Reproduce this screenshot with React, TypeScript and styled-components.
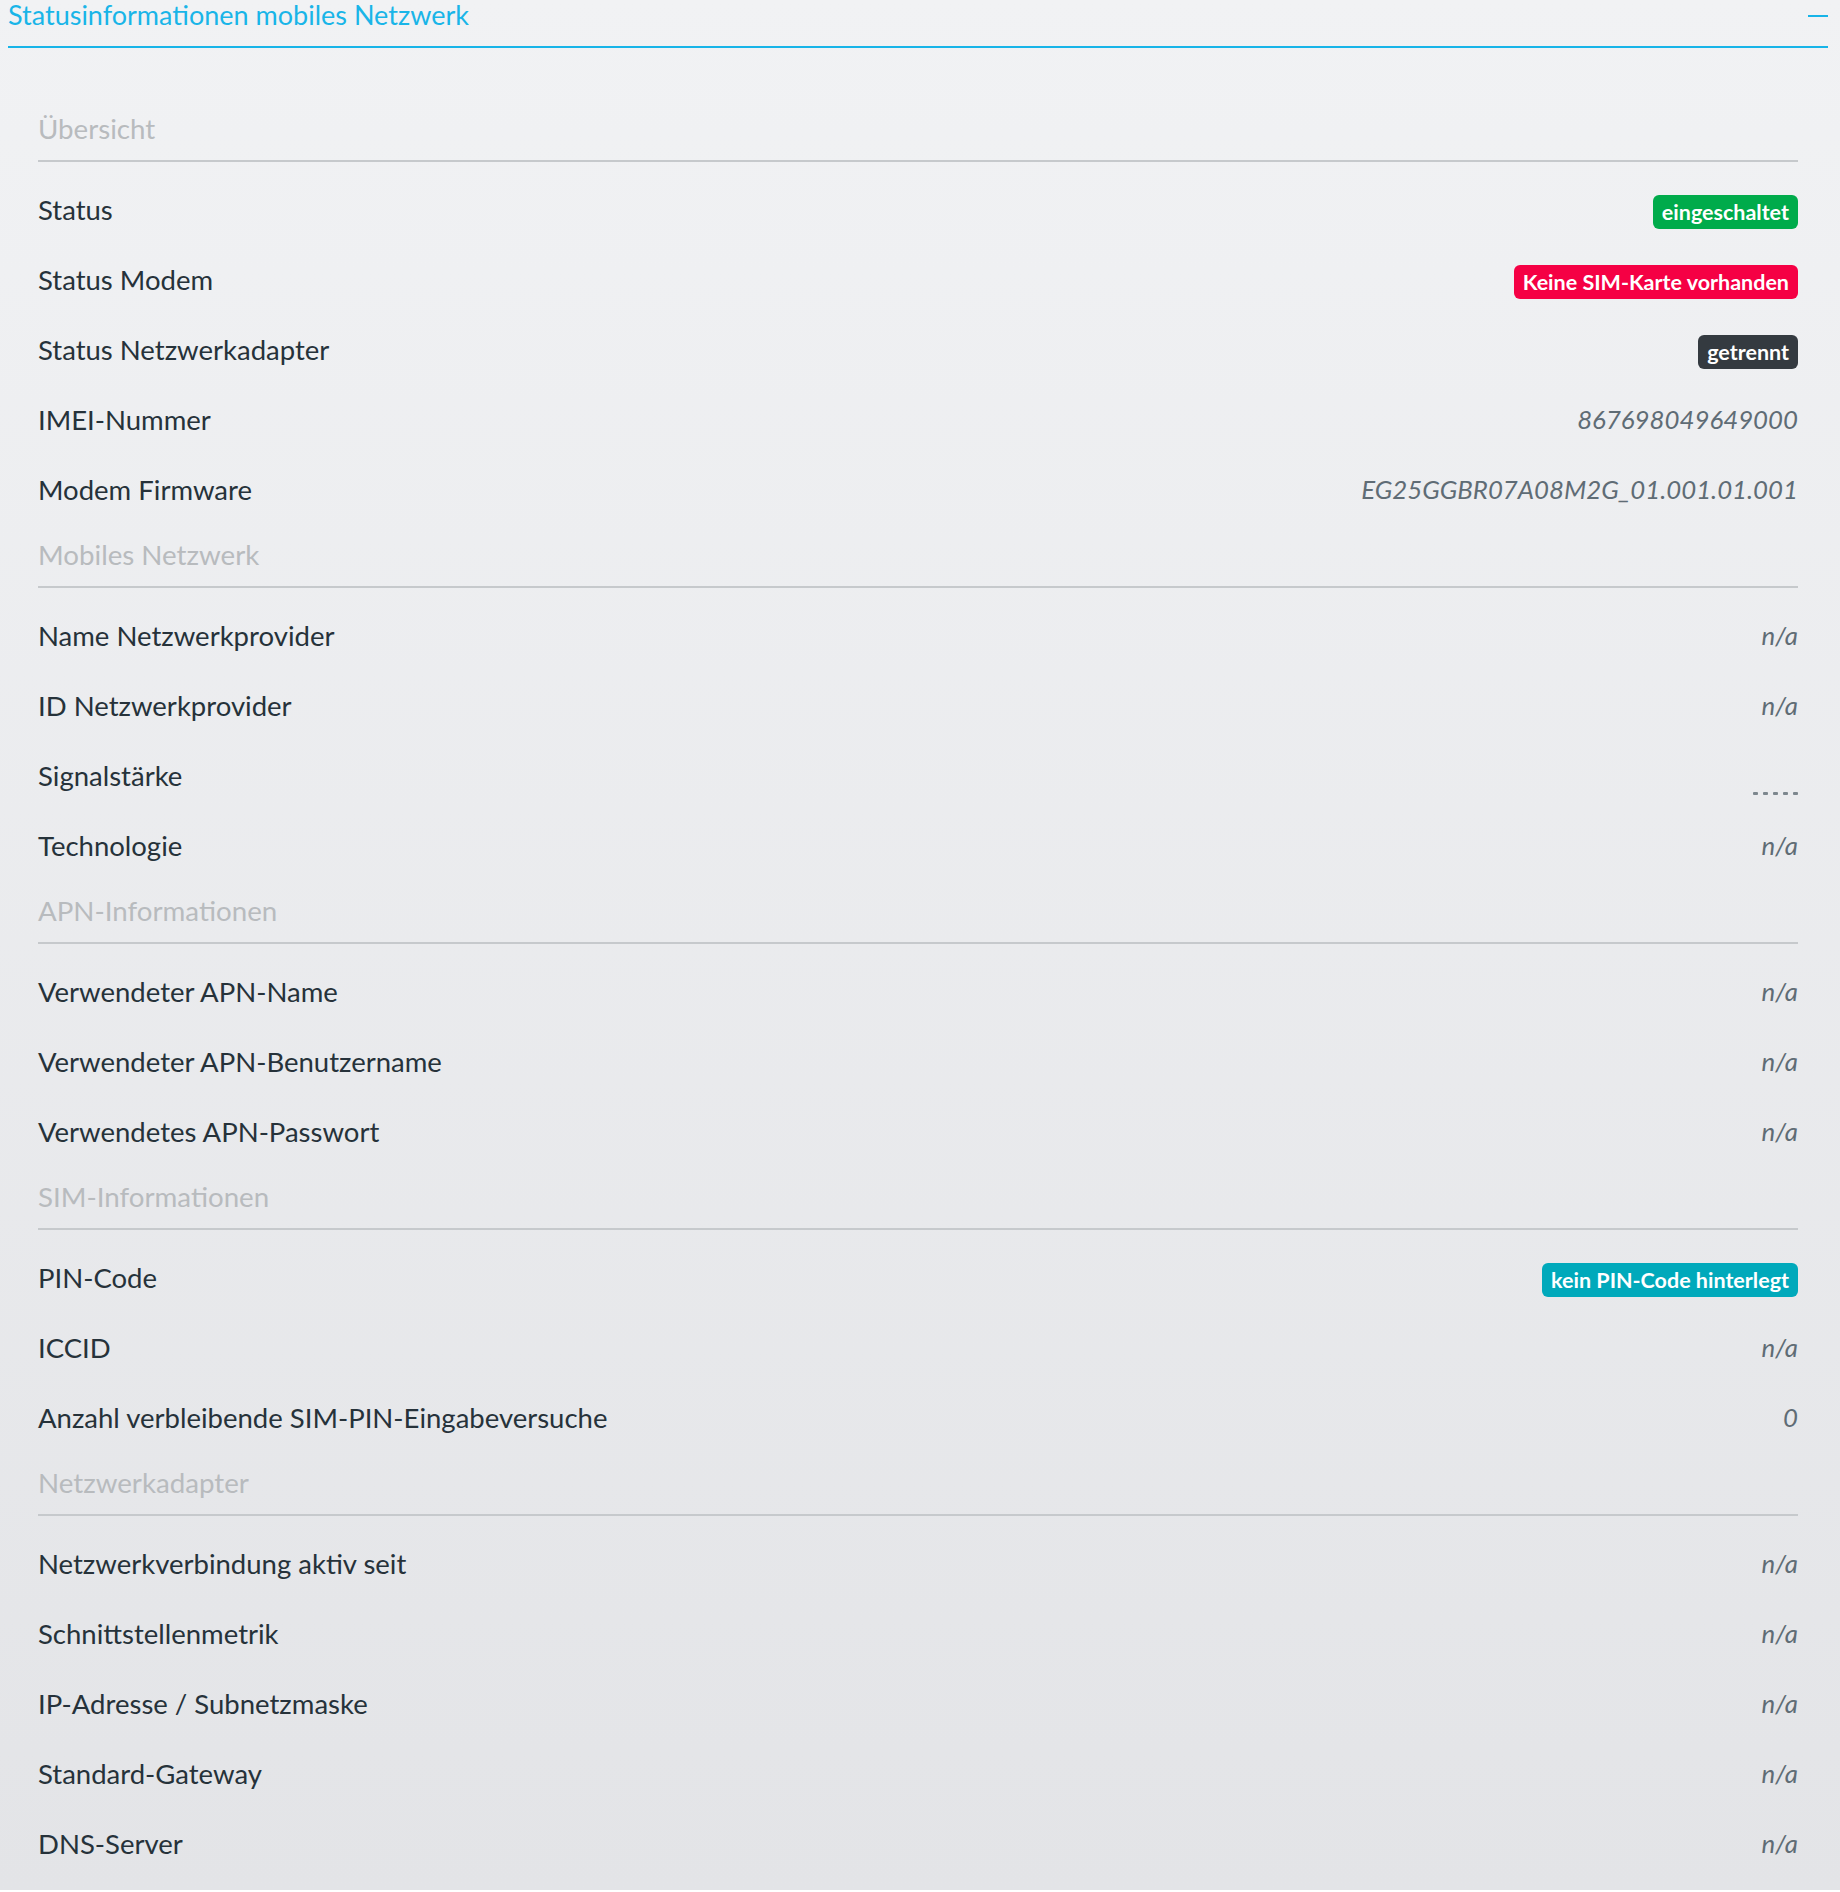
import React from "react";
import styled, { createGlobalStyle } from "styled-components";

type Tone = "success" | "danger" | "dark" | "info";

type Value =
  | { kind: "text"; text: string }
  | { kind: "badge"; tone: Tone; text: string }
  | { kind: "signal" };

type Row = { label: string; value: Value };
type Section = { title: string; rows: Row[] };

const na: Value = { kind: "text", text: "n/a" };

const sections: Section[] = [
  {
    title: "Übersicht",
    rows: [
      { label: "Status", value: { kind: "badge", tone: "success", text: "eingeschaltet" } },
      { label: "Status Modem", value: { kind: "badge", tone: "danger", text: "Keine SIM-Karte vorhanden" } },
      { label: "Status Netzwerkadapter", value: { kind: "badge", tone: "dark", text: "getrennt" } },
      { label: "IMEI-Nummer", value: { kind: "text", text: "867698049649000" } },
      { label: "Modem Firmware", value: { kind: "text", text: "EG25GGBR07A08M2G_01.001.01.001" } },
    ],
  },
  {
    title: "Mobiles Netzwerk",
    rows: [
      { label: "Name Netzwerkprovider", value: na },
      { label: "ID Netzwerkprovider", value: na },
      { label: "Signalstärke", value: { kind: "signal" } },
      { label: "Technologie", value: na },
    ],
  },
  {
    title: "APN-Informationen",
    rows: [
      { label: "Verwendeter APN-Name", value: na },
      { label: "Verwendeter APN-Benutzername", value: na },
      { label: "Verwendetes APN-Passwort", value: na },
    ],
  },
  {
    title: "SIM-Informationen",
    rows: [
      { label: "PIN-Code", value: { kind: "badge", tone: "info", text: "kein PIN-Code hinterlegt" } },
      { label: "ICCID", value: na },
      { label: "Anzahl verbleibende SIM-PIN-Eingabeversuche", value: { kind: "text", text: "0" } },
    ],
  },
  {
    title: "Netzwerkadapter",
    rows: [
      { label: "Netzwerkverbindung aktiv seit", value: na },
      { label: "Schnittstellenmetrik", value: na },
      { label: "IP-Adresse / Subnetzmaske", value: na },
      { label: "Standard-Gateway", value: na },
      { label: "DNS-Server", value: na },
    ],
  },
];

const toneColors: Record<Tone, string> = {
  success: "#00ab4b",
  danger: "#f50044",
  dark: "#343a40",
  info: "#00a9bb",
};

const GlobalStyle = createGlobalStyle`
  body {
    margin: 0;
    background: #ffffff;
    font-family: Lato, "Open Sans", sans-serif;
  }
`;

const Page = styled.div`
  height: 1890px;
  box-sizing: border-box;
  padding: 0 12px 11px 8px;
  background: linear-gradient(180deg, #f1f2f4 0%, #e3e4e7 100%);
`;

const Header = styled.div`
  display: flex;
  justify-content: space-between;
  align-items: flex-start;
  height: 46px;
  border-bottom: 2px solid #17b4e8;
`;

const Title = styled.h2`
  margin: 0;
  font-size: 27px;
  font-weight: 400;
  line-height: 30px;
  color: #19b5e8;
`;

const Collapse = styled.span`
  display: block;
  width: 20px;
  height: 2px;
  margin-top: 15px;
  background: #17b4e8;
`;

const Body = styled.div`
  padding: 50px 30px 0 30px;
`;

const SectionTitle = styled.div`
  padding: 16px 0 16px;
  font-size: 27.7px;
  line-height: 30px;
  color: #b8bbbe;
  border-bottom: 2px solid #c6c9cc;
`;

const Rows = styled.div`
  padding-top: 12px;
`;

const RowLine = styled.div`
  display: flex;
  justify-content: space-between;
  align-items: center;
  height: 70px;
`;

const Label = styled.span`
  font-size: 27.5px;
  color: #26323a;
`;

const ValueText = styled.span`
  font-size: 25.8px;
  font-style: italic;
  color: #5f6c75;
`;

const Badge = styled.span<{ $tone: Tone }>`
  display: inline-block;
  margin-top: 5px;
  padding: 5px 9px;
  border-radius: 6px;
  font-size: 21.5px;
  font-weight: 700;
  line-height: 24px;
  color: #ffffff;
  background: ${(p) => toneColors[p.$tone]};
`;

const Signal = styled.span`
  display: flex;
  gap: 5px;
  align-self: flex-end;
  margin-bottom: 15px;
`;

const Dash = styled.i`
  display: block;
  width: 5px;
  height: 3px;
  border-radius: 1px;
  background: #7d878e;
`;

function renderValue(value: Value) {
  if (value.kind === "badge") return <Badge $tone={value.tone}>{value.text}</Badge>;
  if (value.kind === "signal")
    return (
      <Signal>
        {[0, 1, 2, 3, 4].map((i) => (
          <Dash key={i} />
        ))}
      </Signal>
    );
  return <ValueText>{value.text}</ValueText>;
}

export default function App() {
  return (
    <>
      <GlobalStyle />
      <Page>
        <Header>
          <Title>Statusinformationen mobiles Netzwerk</Title>
          <Collapse />
        </Header>
        <Body>
          {sections.map((section) => (
            <section key={section.title}>
              <SectionTitle>{section.title}</SectionTitle>
              <Rows>
                {section.rows.map((row) => (
                  <RowLine key={row.label}>
                    <Label>{row.label}</Label>
                    {renderValue(row.value)}
                  </RowLine>
                ))}
              </Rows>
            </section>
          ))}
        </Body>
      </Page>
    </>
  );
}
